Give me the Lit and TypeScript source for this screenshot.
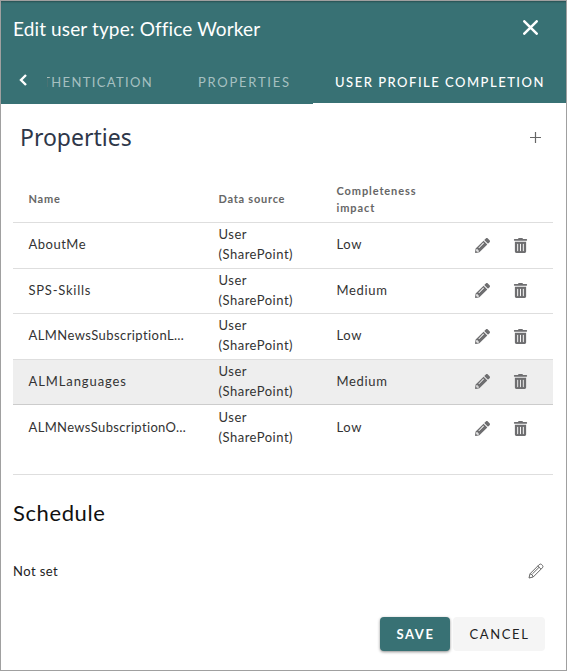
import { LitElement, html, css, svg } from "lit";
import { customElement } from "lit/decorators.js";
import { classMap } from "lit/directives/class-map.js";

interface Row {
  id: string;
  name: string;
  impact: string;
  hover?: boolean;
}

const rows: Row[] = [
  { id: "about", name: "AboutMe", impact: "Low" },
  { id: "skills", name: "SPS-Skills", impact: "Medium" },
  { id: "newsl", name: "ALMNewsSubscriptionL…", impact: "Low" },
  { id: "lang", name: "ALMLanguages", impact: "Medium", hover: true },
  { id: "newso", name: "ALMNewsSubscriptionO…", impact: "Low" },
];

const pencil = svg`<path d="M497.9 142.1l-46.1 46.1c-4.7 4.7-12.3 4.7-17 0l-111-111c-4.7-4.7-4.7-12.3 0-17l46.1-46.1c18.7-18.7 49.1-18.7 67.9 0l60.1 60.1c18.8 18.7 18.8 49.1 0 67.9zM284.2 99.8L21.6 362.4.4 483.9c-2.9 16.4 11.4 30.6 27.8 27.8l121.5-21.3 262.6-262.6c4.7-4.7 4.7-12.3 0-17l-111-111c-4.8-4.7-12.4-4.7-17.1 0zM124.1 339.9c-5.5-5.5-5.5-14.3 0-19.8l154-154c5.5-5.5 14.3-5.5 19.8 0s5.5 14.3 0 19.8l-154 154c-5.5 5.5-14.3 5.5-19.8 0zM88 424h48v36.3l-64.5 11.3-31.1-31.1L51.7 376H88v48z"/>`;
const trash = svg`<path d="M32 464a48 48 0 0 0 48 48h288a48 48 0 0 0 48-48V128H32zm272-256a16 16 0 0 1 32 0v224a16 16 0 0 1-32 0zm-96 0a16 16 0 0 1 32 0v224a16 16 0 0 1-32 0zm-96 0a16 16 0 0 1 32 0v224a16 16 0 0 1-32 0zM432 32H312l-9.4-18.7A24 24 0 0 0 281.1 0H166.8a23.72 23.72 0 0 0-21.4 13.3L136 32H16A16 16 0 0 0 0 48v32a16 16 0 0 0 16 16h416a16 16 0 0 0 16-16V48a16 16 0 0 0-16-16z"/>`;

@customElement("app-root")
export class AppRoot extends LitElement {
  static styles = css`
    :host {
      display: flex;
      flex-direction: column;
      box-sizing: border-box;
      width: 567px;
      height: 671px;
      border: 1px solid #a0a0a0;
      background: #fff;
      font-family: Lato, "Liberation Sans", sans-serif;
      font-size: 13px;
      color: #333;
      overflow: hidden;
      white-space: nowrap;
    }
    svg { display: block; flex: none; }
    .head { background: #387174; color: #fff; height: 103px; flex: none; box-shadow: inset 0 2px 2px -1px rgba(0, 0, 0, 0.3); }
    .titlebar { display: flex; justify-content: space-between; align-items: center; height: 53px; padding: 0 28px 0 12px; }
    .title { font-size: 19px; letter-spacing: 0.13px; padding-top: 1px; }
    .tabs { display: flex; height: 50px; align-items: stretch; font-size: 13px; font-weight: 400; letter-spacing: 1.5px; }
    .back { width: 46px; flex: none; display: flex; align-items: center; padding: 2px 0 0 16.5px; box-sizing: border-box; }
    .clip { width: 108px; flex: none; overflow: hidden; display: flex; justify-content: flex-end; }
    .tab { display: flex; align-items: center; padding-top: 6px; box-sizing: border-box; color: #a6c0c1; }
    .t-auth { letter-spacing: 1.35px; padding-right: 2px; }
    .props { width: 158px; padding-left: 43px; letter-spacing: 1.75px; }
    .active { flex: 1; color: #fff; font-weight: 500; padding-left: 22px; border-bottom: 1px solid #fff; }
    .body { flex: 1; padding: 0 13px 0 12px; display: flex; flex-direction: column; }
    .section { display: flex; justify-content: space-between; align-items: center; height: 68px; padding: 0 11px 2px 7px; box-sizing: border-box; }
    .h-props { font-family: "Noto Sans", sans-serif; font-size: 23px; color: #2e3749; }
    .row { display: grid; grid-template-columns: 190px 118px 138px 38px 1fr; align-items: center; padding-left: 15.5px; box-sizing: border-box; height: 46px; border-bottom: 1px solid #dedede; line-height: 20px; }
    .row > span { padding-bottom: 3px; letter-spacing: 0.5px; }
    .thead { height: 51px; font-size: 11px; font-weight: 700; color: #666; line-height: 17px; padding-top: 4px; }
    .row > .h-cell { padding-bottom: 1px; letter-spacing: 0.75px; }
    .row > .i-head { letter-spacing: 0.9px; }
    .row > .n-skills { letter-spacing: 0.75px; }
    .row > .n-lang { letter-spacing: 0.9px; }
    .row > .n-newsl { letter-spacing: 0.42px; }
    .row > .n-newso { letter-spacing: 0.35px; }
    .row > .i-Low, .row > .i-Medium { letter-spacing: 0.65px; }
    .skills, .lang { height: 45px; }
    .skills .icon, .lang .icon { margin-bottom: 1px; }
    .newso { height: 70px; padding-bottom: 23px; }
    .hover { background: #eee; border-color: #ccc; }
    .icon { fill: #6e6e70; }
    .h-sched { font-size: 22px; color: #111; line-height: 26px; margin-top: 25px; letter-spacing: 0.6px; }
    .sched { display: flex; justify-content: space-between; align-items: center; height: 20px; margin-top: 35px; padding-right: 9.5px; color: #222; letter-spacing: 0.45px; }
    .actions { display: flex; justify-content: flex-end; gap: 3px; margin-top: 36px; padding-right: 8px; }
    .btn { display: flex; align-items: center; justify-content: center; height: 34px; border-radius: 4px; font-size: 13px; letter-spacing: 1.6px; box-sizing: border-box; padding-left: 1px; }
    .save { width: 70px; background: #387174; color: #fff; font-weight: 700; box-shadow: 0 1px 3px rgba(0, 0, 0, 0.45); }
    .cancel { width: 92px; background: #f5f5f5; color: #222; }
  `;

  render() {
    return html`
      <div class="head">
        <div class="titlebar">
          <span class="title">Edit user type: Office Worker</span>
          <svg width="15" height="15" viewBox="0 0 15 15" fill="none" stroke="#fff" stroke-width="2.5" stroke-linecap="round"><path d="M1.3 1.3L13.7 13.7M13.7 1.3L1.3 13.7" /></svg>
        </div>
        <div class="tabs">
          <div class="back"><svg width="10" height="12" viewBox="0 0 10 12" fill="none" stroke="#fff" stroke-width="2.4"><path d="M8 1L3 6L8 11" /></svg></div>
          <div class="clip"><div class="tab t-auth">AUTHENTICATION</div></div>
          <div class="tab props"><span>PROPERTIES</span></div>
          <div class="tab active"><span>USER PROFILE COMPLETION</span></div>
        </div>
      </div>
      <div class="body">
        <div class="section">
          <span class="h-props">Properties</span>
          <svg width="13" height="13" viewBox="0 0 13 13" stroke="#666" stroke-width="1.2"><path d="M6.5 1V12M1 6.5H12" /></svg>
        </div>
        <div class="row thead"><span class="h-cell">Name</span><span class="h-cell">Data source</span><span class="h-cell i-head">Completeness<br />impact</span></div>
        ${rows.map(
          (r) => html`<div class=${classMap({ row: true, [r.id]: true, hover: !!r.hover })}>
            <span class="n-${r.id}">${r.name}</span>
            <span class="source">User<br />(SharePoint)</span>
            <span class="i-${r.impact}">${r.impact}</span>
            <svg class="icon" width="15" height="15" viewBox="0 0 512 512">${pencil}</svg>
            <svg class="icon" width="15" height="15" viewBox="0 0 448 512">${trash}</svg>
          </div>`
        )}
        <div class="h-sched">Schedule</div>
        <div class="sched">
          <span>Not set</span>
          <svg width="16" height="16" viewBox="0 0 16 16" fill="none" stroke="#666" stroke-width="1"><path d="M1 15L2 10.8L11.2 1.6Q12.4.5 13.7 1.6L14.5 2.4Q15.5 3.6 14.4 4.8L5.2 14ZM2 10.8Q4.4 10.8 5.2 14M9.8 3L13 6.2M4.4 10.9L11.2 4.2" /></svg>
        </div>
        <div class="actions"><div class="btn save">SAVE</div><div class="btn cancel">CANCEL</div></div>
      </div>
    `;
  }
}
